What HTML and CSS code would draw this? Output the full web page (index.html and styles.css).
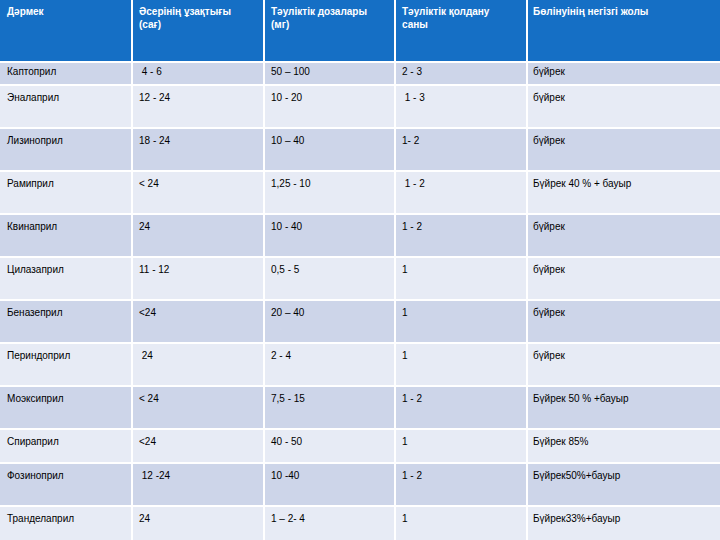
FILE: index.html
```html
<!DOCTYPE html>
<html lang="kk">
<head>
<meta charset="utf-8">
<title>Дәрмек</title>
<link rel="stylesheet" href="styles.css">
</head>
<body>
<div class="table">
  <div class="cell head">Дәрмек</div>
  <div class="cell head">Әсерінің ұзақтығы<br>(сағ)</div>
  <div class="cell head">Тәуліктік дозалары<br>(мг)</div>
  <div class="cell head">Тәуліктік қолдану<br>саны</div>
  <div class="cell head last">Бөлінуінің негізгі жолы</div>

  <div class="cell dark first">Каптоприл</div>
  <div class="cell dark first">&nbsp;4 - 6</div>
  <div class="cell dark first">50 – 100</div>
  <div class="cell dark first">2 - 3</div>
  <div class="cell dark first last">бүйрек</div>

  <div class="cell light">Эналаприл</div>
  <div class="cell light">12 - 24</div>
  <div class="cell light">10 - 20</div>
  <div class="cell light">&nbsp;1 - 3</div>
  <div class="cell light last">бүйрек</div>

  <div class="cell dark">Лизиноприл</div>
  <div class="cell dark">18 - 24</div>
  <div class="cell dark">10 – 40</div>
  <div class="cell dark">1- 2</div>
  <div class="cell dark last">бүйрек</div>

  <div class="cell light">Рамиприл</div>
  <div class="cell light">&lt; 24</div>
  <div class="cell light">1,25 - 10</div>
  <div class="cell light">&nbsp;1 - 2</div>
  <div class="cell light last">Бүйрек 40 % + бауыр</div>

  <div class="cell dark">Квинаприл</div>
  <div class="cell dark">24</div>
  <div class="cell dark">10 - 40</div>
  <div class="cell dark">1 - 2</div>
  <div class="cell dark last">бүйрек</div>

  <div class="cell light">Цилазаприл</div>
  <div class="cell light">11 - 12</div>
  <div class="cell light">0,5 - 5</div>
  <div class="cell light">1</div>
  <div class="cell light last">бүйрек</div>

  <div class="cell dark">Беназеприл</div>
  <div class="cell dark">&lt;24</div>
  <div class="cell dark">20 – 40</div>
  <div class="cell dark">1</div>
  <div class="cell dark last">бүйрек</div>

  <div class="cell light">Периндоприл</div>
  <div class="cell light">&nbsp;24</div>
  <div class="cell light">2 - 4</div>
  <div class="cell light">1</div>
  <div class="cell light last">бүйрек</div>

  <div class="cell dark">Моэксиприл</div>
  <div class="cell dark">&lt; 24</div>
  <div class="cell dark">7,5 - 15</div>
  <div class="cell dark">1 - 2</div>
  <div class="cell dark last">Бүйрек 50 % +бауыр</div>

  <div class="cell light">Спираприл</div>
  <div class="cell light">&lt;24</div>
  <div class="cell light">40 - 50</div>
  <div class="cell light">1</div>
  <div class="cell light last">Бүйрек 85%</div>

  <div class="cell dark">Фозиноприл</div>
  <div class="cell dark">&nbsp;12 -24</div>
  <div class="cell dark">10 -40</div>
  <div class="cell dark">1 - 2</div>
  <div class="cell dark last">Бүйрек50%+бауыр</div>

  <div class="cell light">Транделаприл</div>
  <div class="cell light">24</div>
  <div class="cell light">1 – 2- 4</div>
  <div class="cell light">1</div>
  <div class="cell light last">Бүйрек33%+бауыр</div>
</div>
</body>
</html>
```
FILE: styles.css
```css
html, body {
  margin: 0;
  padding: 0;
  background: #ffffff;
  overflow: hidden;
}

body {
  font-family: "Liberation Sans", Arial, sans-serif;
  font-size: 10px;
  line-height: 12px;
  color: #000000;
}

.table {
  display: grid;
  grid-template-columns: 131px 130px 129px 130px 1fr;
  grid-template-rows: 61px 21px repeat(8, 41px) 32px 41px 33px;
  gap: 2px;
  width: 720px;
  height: 540px;
  background: #ffffff;
}

.cell {
  padding: 6px 4px 0 6px;
  white-space: pre;
  overflow: hidden;
}

.cell:first-child,
.cell:nth-child(5n+1) {
  padding-left: 7px;
}

.last {
  padding-left: 5px;
}

.head {
  background: #156fc5;
  color: #ffffff;
  font-weight: bold;
  padding-top: 6px;
  line-height: 12.5px;
  white-space: normal;
}

.dark {
  background: #cdd5e9;
}

.light {
  background: #e7ebf5;
}

.first {
  padding-top: 3px;
}
```
